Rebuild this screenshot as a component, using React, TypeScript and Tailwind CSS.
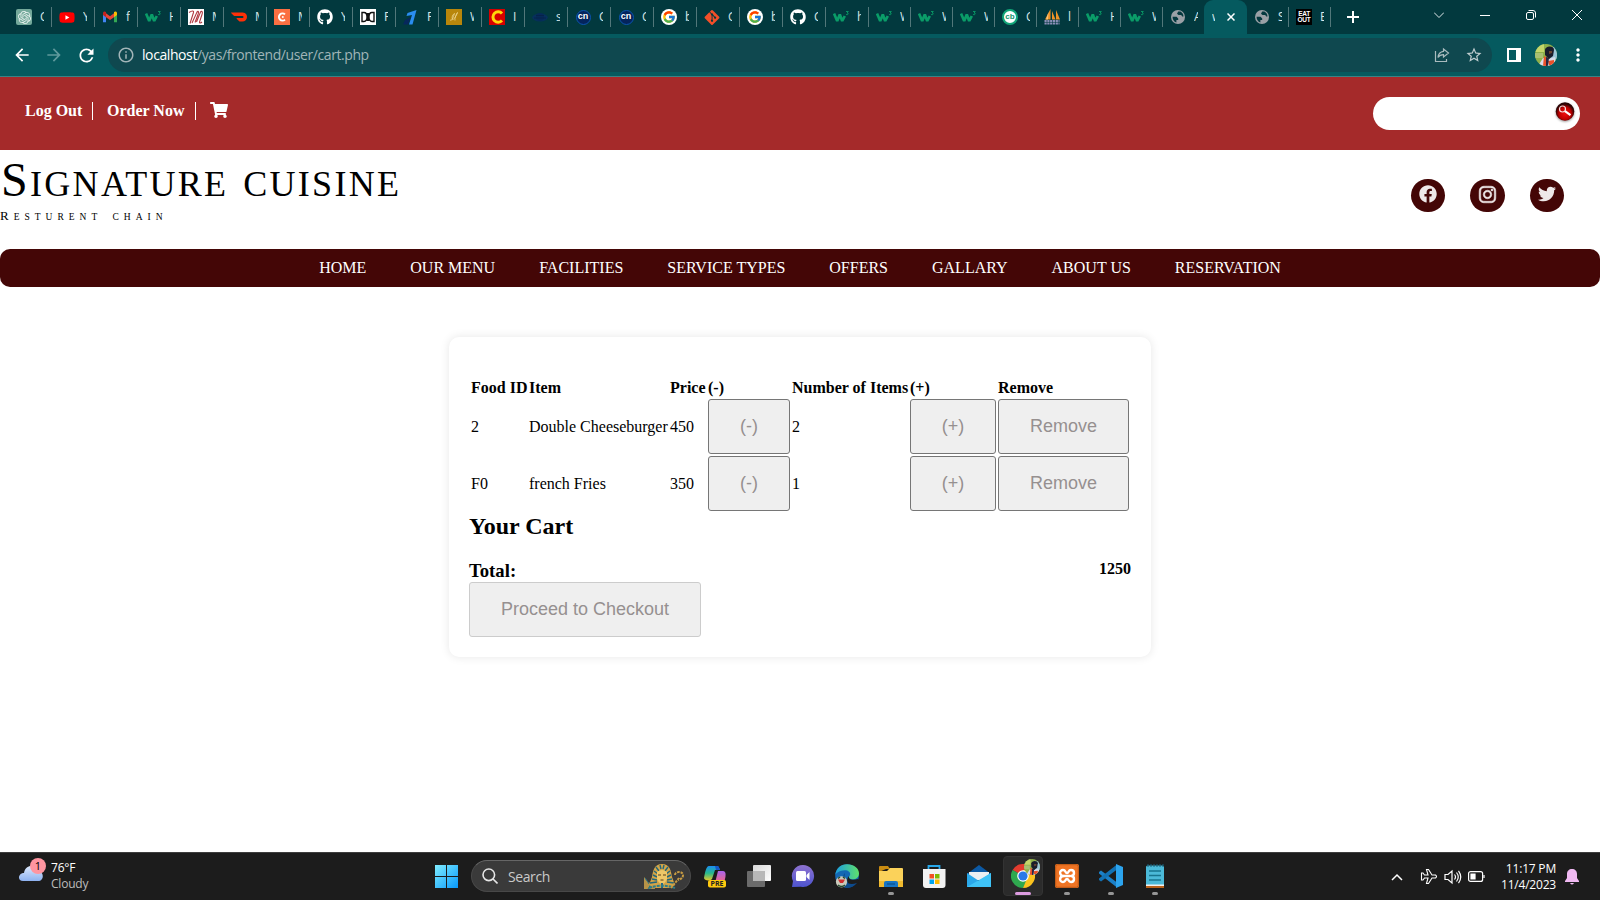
import React from 'react';
import { FaYoutube, FaGithub, FaFacebook, FaInstagram, FaTwitter, FaShoppingCart, FaGitAlt } from 'react-icons/fa';
import { SiOpenai, SiDoordash } from 'react-icons/si';
import { FcGoogle } from 'react-icons/fc';
import { MdArrowBack, MdArrowForward, MdRefresh, MdStarBorder, MdMoreVert, MdInfoOutline } from 'react-icons/md';

type Kind =
  | 'gpt' | 'yt' | 'gmail' | 'w3' | 'm' | 'dash' | 'c' | 'gh' | 'dd' | 'one' | 'gold'
  | 'cred' | 'navy' | 'cn' | 'google' | 'git' | 'cb' | 'pma' | 'globe' | 'eat';

function Favicon({ kind }: { kind: Kind }) {
  switch (kind) {
    case 'gpt':
      return <div className="flex size-4 items-center justify-center rounded-[2px] bg-[#74a99b]"><SiOpenai size={13} color="#e9f3f0" /></div>;
    case 'yt':
      return <FaYoutube size={17} color="#ff0000" className="rounded-[4px] bg-[linear-gradient(white,white)] bg-[length:6px_6px] bg-center bg-no-repeat" />;
    case 'gmail':
      return (
        <svg viewBox="0 0 16 16" className="size-4">
          <path d="M1 3.500v9.800h3V7z" fill="#4285f4" />
          <path d="M12 7v6.300h3V3.500z" fill="#34a853" />
          <path d="M4 4.200v4L8 11l4-2.800v-4L8 7.200z" fill="#ea4335" />
          <path d="M1 4.200C1 2.500 2.800 2 4 3v5.200L1 6z" fill="#c5221f" />
          <path d="M15 4.200C15 2.500 13.200 2 12 3v5.200L15 6z" fill="#fbbc04" />
        </svg>
      );
    case 'w3':
      return (
        <svg viewBox="0 0 16 16" className="size-4" fill="none" stroke="#0a9c68">
          <path d="M1 4.500 L4.200 12 L6.800 5.500 L9.200 12 L11.800 7" strokeWidth="2.700" strokeLinejoin="bevel" />
          <path d="M13 2.500h2.300l-1.200 1.500c2 0 1.400 2.300-1 1.500" strokeWidth=".9" />
        </svg>
      );
    case 'm':
      return (
        <svg viewBox="0 0 16 16" className="size-4">
          <rect width="16" height="16" fill="#fff" />
          <path d="M1 3.500c3-2 5-2 4.500 0L2 14.500M4 14 9 3c1.500-1.500 2 0 1 2.500L7 13.500M8.500 13l4-10c1.500-1.500 2.500 0 1.500 2.500l-2.500 7.500c0 1.500 1.500 1 2.500 0" fill="none" stroke="#b03a42" strokeWidth="1.100" />
        </svg>
      );
    case 'dash':
      return <SiDoordash size={16} color="#ff3008" />;
    case 'c':
      return (
        <svg viewBox="0 0 16 16" className="size-4">
          <rect width="16" height="16" fill="#fb6f42" />
          <path d="M11 5.400a3.600 3.600 0 1 0 0 5.200" fill="none" stroke="#fff" strokeWidth="1.900" />
          <circle cx="8.800" cy="8" r="1" fill="#fff" />
        </svg>
      );
    case 'gh':
      return <FaGithub size={16} color="#fff" />;
    case 'dd':
      return (
        <svg viewBox="0 0 16 16" className="size-4">
          <rect width="16" height="16" fill="#fff" />
          <path d="M2 3.500h2c4 0 4 9 0 9H2zM14 3.500h-2c-4 0-4 9 0 9h2zM7.500 4v8M8.500 4v8" fill="none" stroke="#111" strokeWidth="1.400" />
        </svg>
      );
    case 'one':
      return (
        <svg viewBox="0 0 16 16" className="size-4">
          <path d="M0 15.500 2 11l6-3-3 7.500z" fill="#06275c" />
          <path d="M4.500 4 13.500 1 9.500 15.500H6L9 6 3.500 7z" fill="#2a8df0" />
        </svg>
      );
    case 'gold':
      return (
        <svg viewBox="0 0 16 16" className="size-4">
          <rect width="16" height="16" fill="#b8860b" />
          <path d="M4 11c2 1 3-2 4.500-6.500-2 1-3 4-2 6 1 1 4-4 5-7-1.500 2-3 6-2.500 8" fill="none" stroke="#ecd592" strokeWidth=".8" />
        </svg>
      );
    case 'cred':
      return (
        <svg viewBox="0 0 16 16" className="size-4">
          <rect width="16" height="16" fill="#d60000" />
          <path d="M13 4.500A5.200 5.200 0 1 0 13 11.500" fill="none" stroke="#ffd60a" strokeWidth="3" />
        </svg>
      );
    case 'navy':
      return (
        <svg viewBox="0 0 16 16" className="size-4">
          <ellipse cx="8" cy="8.500" rx="7.800" ry="4" fill="#06305c" />
          <ellipse cx="8" cy="8" rx="4" ry="4" fill="#062a58" />
          <path d="M2 9h12M4 6.500h8" stroke="#06224a" />
        </svg>
      );
    case 'cn':
      return (
        <div className="flex size-[15px] items-center justify-center rounded-full border border-[#0a55b0] bg-[#04245c] pb-0.5 font-['Liberation_Sans',sans-serif] text-[9px] leading-none font-bold text-white">cn</div>
      );
    case 'google':
      return <div className="flex size-4 items-center justify-center rounded-full bg-white"><FcGoogle size={14} /></div>;
    case 'git':
      return <FaGitAlt size={17} color="#f34f29" />;
    case 'cb':
      return (
        <div className="flex size-4 items-center justify-center rounded-full border-2 border-[#12a578] bg-white pb-px font-['Liberation_Sans',sans-serif] text-[8px] leading-none font-bold text-[#12936c]">cb</div>
      );
    case 'pma':
      return (
        <svg viewBox="0 0 16 16" className="size-4">
          <path d="M6.500 0 1 10.500h5.500zM8 2v8.500h3.500zM12 1v9.500h4z" fill="#f09327" />
          <path d="M4.500 3 2 10.500h2z" fill="#f8c37a" />
          <path d="M.5 12h15M.5 14.500h15" stroke="#8c90b8" strokeWidth="2" strokeDasharray="2.200 .6" />
        </svg>
      );
    case 'globe':
      return (
        <svg viewBox="0 0 16 16" className="size-4">
          <circle cx="8" cy="8" r="7" fill="#9aa0a6" />
          <path d="M2.600 7.800h4l1.600 1.700v1.600H6.400v2.500C3.900 12.700 2.500 10.600 2.600 7.800zM8.200 2.600h2.200c2 1 3 2.700 3.100 4.900h-1.300l-1-1.500H8.500L7 4.700z" fill="#05393f" />
        </svg>
      );
    case 'eat':
      return (
        <div className="flex size-4 flex-col items-center justify-center bg-black font-['Liberation_Sans',sans-serif] text-[6.500px] leading-[6px] font-bold tracking-[-0.3px] text-white">
          <span>EAT</span><span>OUT</span>
        </div>
      );
  }
}

const wideTabs: [Kind, string][] = [
  ['gpt', 'C'], ['yt', 'Y'], ['gmail', 'f'], ['w3', 'H'], ['m', 'M'], ['dash', 'M'], ['c', 'M'], ['gh', 'Y'],
  ['dd', 'F'], ['one', 'F'], ['gold', 'W'], ['cred', 'I'], ['navy', 's'], ['cn', 'C'], ['cn', 'C'], ['google', 'b'],
  ['git', 'G'], ['google', 'b'], ['gh', 'C'], ['w3', 'h'],
];
const narrowTabs: [Kind, string][] = [
  ['w3', 'W'], ['w3', 'W'], ['w3', 'W'], ['cb', 'C'], ['pma', 'l'], ['w3', 'H'], ['w3', 'W'],
];

function Tab({ kind, letter, width, last }: { kind: Kind; letter: string; width: string; last?: boolean }) {
  return (
    <div className={`${width} flex h-5 shrink-0 items-center border-r pl-[7px] ${last ? 'border-transparent' : 'border-[#52777a]'}`}>
      <div className="flex w-4 shrink-0 justify-center"><Favicon kind={kind} /></div>
      <span className="ml-2 w-1 overflow-hidden text-[12px] leading-4 text-[#d8e6e6]">{letter}</span>
    </div>
  );
}

function TabStrip() {
  return (
    <div className="flex h-[34px] shrink-0 items-center bg-[#02393e] pl-[9px]">
      {wideTabs.map(([k, l], i) => <Tab key={i} kind={k} letter={l} width="w-[43px]" />)}
      {narrowTabs.map(([k, l], i) => <Tab key={i} kind={k} letter={l} width="w-[42px]" />)}
      <Tab kind="globe" letter="A" width="w-[41px]" last />
      <div className="flex h-full w-[43px] shrink-0 items-center rounded-t-[9px] bg-[#055a5f] pl-2">
        <span className="w-[3px] overflow-hidden text-[12px] text-[#d8e6e6]">w</span>
        <svg viewBox="0 0 8 8" className="ml-3 size-2" stroke="#fff" strokeWidth="1.500"><path d="M.5.5l7 7M7.500.5l-7 7" /></svg>
      </div>
      <Tab kind="globe" letter="S" width="w-[42px]" />
      <Tab kind="eat" letter="E" width="w-[42px]" />
      <svg viewBox="0 0 12 12" className="ml-[16px] size-3" stroke="#fff" strokeWidth="2"><path d="M6 0v12M0 6h12" /></svg>
      <div className="mb-1 ml-auto flex items-center pr-[18px]">
        <svg viewBox="0 0 10 10" className="mr-[36px] size-[10px]" fill="none" stroke="#dfe9ea"><path d="M0 2.500l5 5 5-5" /></svg>
        <svg viewBox="0 0 10 10" className="mr-[36px] size-[10px]" stroke="#fff"><path d="M0 5.500h10" /></svg>
        <svg viewBox="0 0 10 10" className="mr-[36px] size-[10px]" fill="none" stroke="#fff"><rect x=".5" y="2.500" width="7" height="7" rx="1.500" /><path d="M2.500.5H7A2.500 2.500 0 0 1 9.500 3v4.500" /></svg>
        <svg viewBox="0 0 10 10" className="size-[10px]" stroke="#fff"><path d="M0 0l10 10M10 0L0 10" /></svg>
      </div>
    </div>
  );
}

function Avatar({ className }: { className: string }) {
  return (
    <svg viewBox="0 0 22 22" className={className}>
      <defs><clipPath id="avatar"><circle cx="11" cy="11" r="11" /></clipPath></defs>
      <g clipPath="url(#avatar)">
        <rect width="22" height="22" fill="#8fb04a" />
        <path d="M0 0h9v8H0z" fill="#c4d56a" />
        <path d="M0 9h8v5H0z" fill="#a9bf72" />
        <path d="M15 3h7v12h-7z" fill="#9cc6d8" />
        <path d="M3 22l5-8 5 1 7-2 2 9z" fill="#d8dbe8" />
        <path d="M8 22l1-10 3 2v8zM13 17l6-1v5h-5z" fill="#e8502a" />
        <path d="M10 6c0-4 9-5 9 0l-1 6-4 3-4-4z" fill="#1a1c2b" />
        <path d="M14 7h3v2l-3 1z" fill="#6a4430" />
        <path d="M11 13l3 1-1 8h-2z" fill="#2a2640" />
      </g>
    </svg>
  );
}

function Toolbar() {
  return (
    <div className="flex h-[43px] shrink-0 items-start border-b border-[#3a8285] bg-[#055a5f] pt-1">
      <div className="flex h-[34px] items-center">
        <MdArrowBack size={20} color="#fff" className="ml-3" />
        <MdArrowForward size={20} color="#5f999c" className="ml-3" />
        <MdRefresh size={21} color="#fff" className="ml-3" />
      </div>
      <div className="ml-[11px] flex h-[34px] w-[1384px] items-center rounded-full bg-[#0f484f] pr-[9px] pl-[9px]">
        <MdInfoOutline size={18} color="#a3b5b8" />
        <span className="ml-[7px] pb-px text-[14px] tracking-[-0.41px] text-[#a0b5b8]"><span className="text-white">localhost</span>/yas/frontend/user/cart.php</span>
        <svg viewBox="0 0 16 16" className="ml-auto size-4" fill="none" stroke="#a9bbbe" strokeWidth="1.200">
          <path d="M1.500 4v10.500h11V12M9.500 2l5 4-5 4V7.700C7 7.700 5.200 8.500 4 10.500 4.300 7 6.500 4.600 9.500 4.300z" />
        </svg>
        <MdStarBorder size={18} color="#c0cdcf" className="ml-[15px]" />
      </div>
      <div className="flex h-[34px] items-center">
        <svg viewBox="0 0 14 14" className="ml-[15px] size-[14px]"><rect x="1" y="1" width="12" height="12" fill="none" stroke="#fff" strokeWidth="2" /><path d="M9 0h5v14H9z" fill="#fff" /></svg>
        <Avatar className="ml-[14px] size-[22px]" />
        <MdMoreVert size={20} color="#fff" className="ml-[11px]" />
      </div>
    </div>
  );
}

function SiteHeader() {
  const social = "flex h-[33px] w-[34px] items-center justify-center rounded-full bg-[#440606] pb-[3px]";
  return (
    <header className="shrink-0">
      <div className="flex h-[73px] justify-between bg-[#a52a2a] pr-5 pl-[25px]">
        <div className="mt-[25px] flex h-[18px] text-[16px] leading-[18px] font-bold text-white">
          <a className="w-[68px] border-r border-white">Log Out</a>
          <a className="ml-[14px] w-[89px] border-r border-white">Order Now</a>
          <FaShoppingCart size={18} className="-mt-px ml-[14px]" />
        </div>
        <div className="mt-5 flex h-[33px] w-[207px] justify-end rounded-full bg-white pt-[5px] pr-[5px]">
          <svg viewBox="0 0 20 20" className="size-5 drop-shadow-[0_1px_1px_rgba(0,0,0,0.4)]">
            <defs><radialGradient id="glass" cy=".6"><stop offset="0" stopColor="#f01010" /><stop offset=".65" stopColor="#c00000" /><stop offset="1" stopColor="#2a0505" /></radialGradient></defs>
            <circle cx="10" cy="9.500" r="9.300" fill="url(#glass)" />
            <circle cx="7.500" cy="7" r="3" fill="none" stroke="#f4dede" strokeWidth="1.200" />
            <path d="M10 9.200l5.500 4" stroke="#fff" strokeWidth="2.200" />
          </svg>
        </div>
      </div>
      <div className="flex h-[99px] justify-between">
        <div className="flex flex-col whitespace-nowrap text-black">
          <h1 className="mt-[2px] h-[55px] pl-px text-[48px] leading-[55px] tracking-[2.3px]">S<span className="text-[36px] [word-spacing:3.500px]">IGNATURE CUISINE</span></h1>
          <p className="mt-[1px] h-4 text-[13px] leading-4 tracking-[5px]">R<span className="text-[9.500px] [word-spacing:3px]">ESTURENT CHAIN</span></p>
        </div>
        <div className="mt-[29px] mr-9 flex h-[33px] gap-[25px] text-[#eee8e8]">
          <div className={social}><FaFacebook size={18} /></div>
          <div className="flex h-[33px] w-[35px] items-center justify-center rounded-full bg-[#440606] pb-[3px]"><FaInstagram size={19} stroke="currentColor" strokeWidth={16} /></div>
          <div className={social}><FaTwitter size={18} /></div>
        </div>
      </div>
      <nav className="flex h-[38px] items-center justify-center gap-11 rounded-[10px] bg-[#440606] text-[16px] text-white">
        {['HOME', 'OUR MENU', 'FACILITIES', 'SERVICE TYPES', 'OFFERS', 'GALLARY', 'ABOUT US', 'RESERVATION'].map((t) => <a key={t}>{t}</a>)}
      </nav>
    </header>
  );
}

const btn = "flex h-[55px] items-center justify-center rounded-[3px] border border-[#767676] bg-[#efefef] pb-[2px] font-['Liberation_Sans',Arial,sans-serif] text-[18px] text-[#969090]";

function Cart() {
  const rows = [['2', 'Double Cheeseburger', '450', '2'], ['F0', 'french Fries', '350', '1']];
  return (
    <section className="mx-auto mt-[50px] flex h-[320px] w-[702px] shrink-0 flex-col rounded-[10px] bg-white px-5 text-[16px] leading-[18px] text-black shadow-[0_0_10px_rgba(0,0,0,0.1)]">
      <div className="mt-[42px] ml-[2px] grid grid-cols-[56px_139px_36px_82px_116px_86px_131px] items-center gap-[2px] whitespace-nowrap">
        {['Food ID', 'Item', 'Price', '(-)', 'Number of Items', '(+)', 'Remove'].map((h) => <b key={h}>{h}</b>)}
        {rows.map((r) => (
          <React.Fragment key={r[0]}>
            <span>{r[0]}</span><span>{r[1]}</span><span>{r[2]}</span>
            <button className={btn}>(-)</button>
            <span>{r[3]}</span>
            <button className={btn}>(+)</button>
            <button className={btn}>Remove</button>
          </React.Fragment>
        ))}
      </div>
      <h2 className="mt-[1px] h-7 text-[24px] leading-7 font-bold">Your Cart</h2>
      <div className="mt-5 flex h-[22px] justify-between font-bold">
        <h3 className="text-[18.720px] leading-[21px]">Total:</h3>
        <span>1250</span>
      </div>
      <button className="flex h-[55px] w-[232px] items-center justify-center rounded-[3px] border border-[#cccccc] bg-[#efefef] pb-[2px] font-['Liberation_Sans',Arial,sans-serif] text-[18px] text-[#969090]">Proceed to Checkout</button>
    </section>
  );
}

const apps: { name: string; state?: 'open' | 'active'; icon: React.ReactNode }[] = [
  {
    name: 'copilot',
    icon: (
      <svg viewBox="0 0 24 24" className="size-6">
        <defs>
          <linearGradient id="cp1" x2="0" y2="1"><stop stopColor="#1b8df0" /><stop offset=".5" stopColor="#28b98b" /><stop offset="1" stopColor="#e5c92c" /></linearGradient>
          <linearGradient id="cp2" x2="0" y2="1"><stop stopColor="#a964ee" /><stop offset="1" stopColor="#f5687a" /></linearGradient>
        </defs>
        <path d="M6 2h8c2 0 2 2 3 4h-5L9 15c-1 2-8 2-8-1C2 9 3 2 6 2z" fill="url(#cp1)" />
        <path d="M12 2h2c2 0 2 2 3 4h-4z" fill="#1456c8" />
        <path d="M15 7h5c3 0 3 4 2 8l-1 4h-9z" fill="url(#cp2)" />
        <rect x="5" y="16" width="18" height="7.500" rx="2" fill="#ffc90e" />
        <text x="14" y="22.300" textAnchor="middle" fontSize="7" fontWeight="700" fontFamily="Open Sans, sans-serif" fill="#222">PRE</text>
      </svg>
    ),
  },
  {
    name: 'task view',
    icon: (
      <svg viewBox="0 0 24 24" className="size-6"><defs><linearGradient id="tv" x2="1" y2="1"><stop stopColor="#d8d8d8" /><stop offset="1" stopColor="#fff" /></linearGradient></defs>
        <rect x="0" y="7" width="18" height="16" rx="1" fill="#6b6b6b" /><rect x="6" y="1" width="18" height="16" rx="1" fill="url(#tv)" /><path d="M6 7h12v10H6z" fill="#b8b8b8" /></svg>
    ),
  },
  {
    name: 'chat',
    icon: (
      <svg viewBox="0 0 24 24" className="size-6"><defs><linearGradient id="ch" x2="0" y2="1"><stop stopColor="#8e72cf" /><stop offset="1" stopColor="#4d54cf" /></linearGradient></defs>
        <path d="M12 1a11 11 0 1 1-2 21.800L1 23l1-6A11 11 0 0 1 12 1z" fill="url(#ch)" /><rect x="5" y="7" width="10" height="10" rx="1.500" fill="#fff" /><path d="M15.500 11l3-3v8l-3-3z" fill="#fff" /></svg>
    ),
  },
  {
    name: 'edge',
    icon: (
      <svg viewBox="0 0 24 24" className="size-6"><defs><linearGradient id="ed"><stop stopColor="#1b9ee0" /><stop offset="1" stopColor="#5fe06b" /></linearGradient></defs>
        <circle cx="12" cy="12" r="11.800" fill="#1468b4" />
        <path d="M.3 11C1 4 6 .2 12 .2c7 0 12 4 12 9 0 4-3 6-6 6-4 0-5-2-3-4 1-3-2-5-5-5C5 6 1 9 .3 11z" fill="url(#ed)" />
        <path d="M14 12c-1 3 3 5 9 3l1 5-6 2c-5 0-8-6-4-10z" fill="#1c1c1c" /><path d="M10 9c-5 5 1 14 12 10-4 5-10 6-14 3z" fill="#0d4a8c" />
        <circle cx="6.500" cy="17.800" r="5.600" fill="#c9cabb" /><path d="M3 21q3.500 3 7 0M3 14.500l2-1.500M10 14.500l-2-1.500" stroke="#24492f" strokeWidth="1.500" fill="none" /><path d="M3 15.500h7L8 19H5z" fill="#d02e2e" />
      </svg>
    ),
  },
  {
    name: 'files', state: 'open',
    icon: (
      <svg viewBox="0 0 24 24" className="size-6"><path d="M0 3q0-1 1-1h8l2 3h-4L0 8z" fill="#c98b11" /><path d="M0 7h8l3-3h12q1 0 1 1v18H0z" fill="#fbd25a" /><path d="M0 17h24v6H0z" fill="#f0ba2e" /><path d="M5 23v-4q0-2 2-2h10q2 0 2 2v4z" fill="#1774c4" /><path d="M8 20h8" stroke="#0f5797" strokeWidth="1.500" /></svg>
    ),
  },
  {
    name: 'store',
    icon: (
      <svg viewBox="0 0 24 24" className="size-6"><path d="M5.500 6V2h11v4" fill="none" stroke="#28a8ea" strokeWidth="1.800" /><path d="M0 5h22.500v16q0 3-3 3H3q-3 0-3-3z" fill="#f2f2f2" /><path d="M6.500 10H11v4.500H6.500z" fill="#f25022" /><path d="M12 10h4.500v4.500H12z" fill="#7fba00" /><path d="M6.500 15.500H11V20H6.500z" fill="#00a4ef" /><path d="M12 15.500h4.500V20H12z" fill="#ffb900" /></svg>
    ),
  },
  {
    name: 'mail',
    icon: (
      <svg viewBox="0 0 24 24" className="size-6"><path d="M0 10 12 1l12 9z" fill="#0c59a4" /><path d="M2 8h20v8H2z" fill="#eceff2" /><path d="M0 9l12 8 12-8v14H0z" fill="#2aa8ea" /><path d="M0 23 24 9v14z" fill="#3fc3f7" /></svg>
    ),
  },
  {
    name: 'chrome', state: 'active',
    icon: (
      <div className="relative size-6">
        <svg viewBox="0 0 24 24" className="size-6"><path d="M12 12 1.600 6A12 12 0 0 1 22.400 6z" fill="#e33b2e" /><path d="M12 12 1.600 6A12 12 0 0 0 12 24l5-9z" fill="#2fa84f" /><path d="M12 12h5l-5 12A12 12 0 0 0 22.400 6H12z" fill="#fcc31e" /><circle cx="12" cy="12" r="5.800" fill="#fff" /><circle cx="12" cy="12" r="4.600" fill="#2a79e8" /></svg>
        <Avatar className="absolute -top-[5px] left-[13px] size-4" />
      </div>
    ),
  },
  {
    name: 'xampp', state: 'open',
    icon: (
      <svg viewBox="0 0 24 24" className="size-6"><rect width="24" height="24" rx="2" fill="#ef7424" /><rect x=".7" y=".7" width="22.600" height="22.600" rx="2" fill="none" stroke="#b95716" /><path d="M9 12H15M9 12C4 12 4 6 8 6c3 0 2 3 4 3s1-3 4-3c4 0 4 6 0 6 4 0 4 6 0 6-3 0-2-3-4-3s-1 3-4 3c-4 0-4-6 1-6z" fill="#ef7424" stroke="#fff" strokeWidth="2.400" strokeLinejoin="round" /></svg>
    ),
  },
  {
    name: 'code', state: 'open',
    icon: (
      <svg viewBox="0 0 24 24" className="size-6"><path d="M0 8l2-1.500L18 18.500v5L0 9.500z" fill="#1b80c8" /><path d="M0 16l2 1.500L18 5.500v-5L0 14.500z" fill="#1272b5" /><path d="M17 0l7 3v18l-7 3z" fill="#2ca4ee" /></svg>
    ),
  },
  {
    name: 'notepad', state: 'open',
    icon: (
      <svg viewBox="0 0 24 24" className="size-6"><rect x="3" y="1.500" width="18" height="22" rx="1.500" fill="#4bb9d8" /><path d="M3 20.500h18v1.500H3z" fill="#f1f1f1" /><path d="M3 22h18v2H3z" fill="#b9611a" /><path d="M5 0v3M8 0v3M11 0v3M14 0v3M17 0v3M20 0v3" stroke="#17637d" /><path d="M6 7h12M6 11.500h12M6 16h12" stroke="#17748f" strokeWidth="1.600" /></svg>
    ),
  },
];

function Pharaoh() {
  return (
    <svg viewBox="0 0 40 26" className="h-[26px] w-10">
      <path d="M0 26V14l5 6 5-4 1 10z" fill="#b69348" /><path d="M1 15l7 10M4 26l5-8" stroke="#247084" />
      <path d="M18 1C10 1 9 8 8 14l-3 8 6 3h14l6-3-3-8C27 8 26 1 18 1z" fill="#d3a447" />
      <path d="M12 4l3 4M10 8l4 3M9 12l4 2M8 16l5 1M6 20l7-1M24 4l-3 4M26 8l-4 3M27 12l-4 2M28 16l-5 1M30 20l-7-1M16 2l1 4M20 2l-1 4" stroke="#22677c" strokeWidth="1.400" />
      <path d="M13 9q5-4 10 0v7q-2 5-5 5t-5-5z" fill="#eec768" /><path d="M14 12h3M19 12h3M16.500 17h3" stroke="#593d1b" /><path d="M17 20h2v5h-2z" fill="#246c8c" />
      <path d="M5 25c8-3 18-3 26 0" stroke="#2c7d8a" strokeWidth="2" fill="none" strokeDasharray="3 1" />
      <path d="M27 25l8-10M31 12c0-4 8-4 8 0 0 3-2 4-5 5" fill="none" stroke="#c69b43" strokeWidth="2" strokeDasharray="2.500 1" />
    </svg>
  );
}

function Taskbar() {
  return (
    <footer className="flex h-12 shrink-0 border-t border-[#3d3d3d] bg-[#1c1c1c] text-[12px]">
      <div className="flex w-[435px] pl-[18px]">
        <div className="relative mt-2 h-6 w-[30px]">
          <svg viewBox="0 0 26 18" className="absolute top-[3px] left-0 h-[18px] w-[26px]"><defs><linearGradient id="cl" x2="0" y2="1"><stop stopColor="#dce9fc" /><stop offset="1" stopColor="#8eb2f0" /></linearGradient></defs><path d="M5 17c-6 0-5-8 1-8C7 1 17-1 19 7c7-1 8 10 1 10z" fill="url(#cl)" /></svg>
          <span className="absolute -top-[3px] left-3 flex size-4 items-center justify-center rounded-full bg-[#ff95a0] text-[11px] text-black">1</span>
        </div>
        <div className="mt-[7px] ml-[3px] leading-4 tracking-[-0.2px]"><p className="text-white">76°F</p><p className="text-[#bdbdbd]">Cloudy</p></div>
      </div>
      <svg viewBox="0 0 23 23" className="mt-3 size-[23px]"><defs><linearGradient id="win" gradientUnits="userSpaceOnUse" x2="23" y2="23"><stop stopColor="#80edff" /><stop offset="1" stopColor="#0798fa" /></linearGradient></defs><path d="M0 0h11v11H0zM12 0h11v11H12zM0 12h11v11H0zM12 12h11v11H12z" fill="url(#win)" /></svg>
      <div className="mt-[7px] ml-[13px] flex h-8 w-[220px] items-center rounded-full border border-[#484848] border-t-[#666] bg-[#3a3a3a] pr-[6px] pl-[10px]">
        <svg viewBox="0 0 16 16" className="size-4" fill="none" stroke="#e6e6e6" strokeWidth="1.600"><circle cx="6.800" cy="6.800" r="5.800" /><path d="M11 11l4.500 4.500" /></svg>
        <span className="ml-[10px] text-[14px] tracking-[-0.4px] text-[#c9c9c9]">Search</span>
        <div className="ml-auto"><Pharaoh /></div>
      </div>
      <div className="ml-[2px] flex">
        {apps.map((a) => (
          <div key={a.name} className="flex w-11 justify-center">
            <div className={`mt-[3px] flex h-10 w-10 flex-col items-center rounded-[4px] ${a.state === 'active' ? 'border border-[#333] bg-[#2b2b2b] pt-[7px]' : 'pt-2'}`}>
              {a.icon}
              {a.state && <div className={`mt-1 h-[3px] shrink-0 rounded-full ${a.state === 'active' ? 'w-4 bg-[#dc9ce0]' : 'w-[6px] bg-[#969696]'}`} />}
            </div>
          </div>
        ))}
      </div>
      <div className="ml-auto flex h-[47px] items-center pr-[21px] text-white">
        <svg viewBox="0 0 12 8" className="h-2 w-3" fill="none" stroke="#fff" strokeWidth="1.500"><path d="M1 7l5-5 5 5" /></svg>
        <svg viewBox="0 0 18 18" className="ml-[17px] size-[18px]" fill="none" stroke="#fff" strokeWidth="1.100"><path d="M6.500 1.500h2l3.500 5.500h3.500q2 1.500 0 3H12l-3.500 5.500h-2L8 10H4.500L3 12H1.500V5H3l1.500 2H8z" /></svg>
        <svg viewBox="0 0 18 16" className="ml-[6px] h-4 w-[18px]" fill="none" stroke="#fff" strokeWidth="1.200"><path d="M1 5.500h3L8 2v12l-4-3.500H1zM10.500 5.500q2 2.500 0 5M12.500 3.500q3.500 4.500 0 9M14.500 1.800q4.500 6.200 0 12.400" /></svg>
        <svg viewBox="0 0 17 11" className="ml-[6px] h-[11px] w-[17px]" fill="none" stroke="#fff" strokeWidth="1.200"><rect x=".6" y=".6" width="14" height="9.800" rx="2" /><path d="M3 3h4v5H3z" fill="#fff" /><path d="M16 4v3" /></svg>
        <div className="ml-[13px] w-[58px] text-right text-[12px] leading-4 tracking-[-0.2px] whitespace-nowrap"><p>11:17 PM</p><p>11/4/2023</p></div>
        <svg viewBox="0 0 14 16" className="ml-[9px] h-4 w-[14px]" fill="#f0b9f2"><path d="M7 0c3 0 5 2 5 5v4l2 3v1H0v-1l2-3V5c0-3 2-5 5-5zM5 14h4q-2 3-4 0z" /></svg>
      </div>
    </footer>
  );
}

export default function App() {
  return (
    <div className="flex h-[900px] w-[1600px] flex-col overflow-hidden bg-white font-['Open_Sans','Noto_Sans',sans-serif]">
      <TabStrip />
      <Toolbar />
      <main className="flex min-h-0 flex-1 flex-col font-['Liberation_Serif','Times_New_Roman',serif]">
        <SiteHeader />
        <Cart />
      </main>
      <Taskbar />
    </div>
  );
}
